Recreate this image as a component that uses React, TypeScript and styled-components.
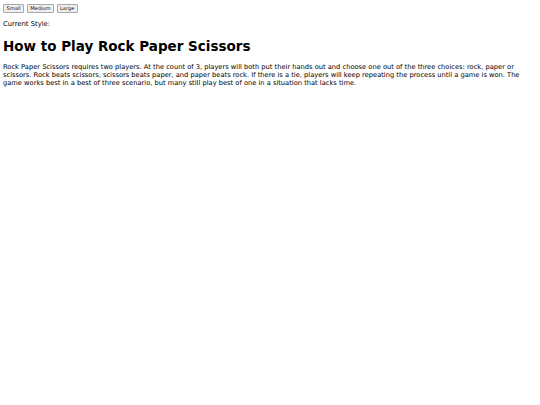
import styled, { createGlobalStyle } from 'styled-components';

const GlobalStyle = createGlobalStyle`
  body {
    margin: 3px;
    font-family: "DejaVu Sans", Verdana, sans-serif;
    background: #fff;
    color: #000;
  }
`;

const Toolbar = styled.div`
  display: flex;
  gap: 2.5px;
  padding-top: 1px;
`;

const SizeButton = styled.button`
  font-family: "DejaVu Sans", Verdana, sans-serif;
  font-size: 5.1px;
  padding: 0 2.5px;
  height: 8.5px;
  line-height: 6px;
  background: #efefef;
  border: 1px solid #a8a8a8;
  border-radius: 1px;
  color: #111;
`;

const Status = styled.p`
  font-size: 6.8px;
  margin: 7.5px 0 0;
`;

const Title = styled.h1`
  font-size: 13.5px;
  font-weight: bold;
  margin: 10px 0 0;
`;

const Body = styled.p`
  font-size: 6.7px;
  line-height: 8px;
  margin: 9px 0 0;
`;

export default function App() {
  return (
    <>
      <GlobalStyle />
      <Toolbar>
        <SizeButton>Small</SizeButton>
        <SizeButton>Medium</SizeButton>
        <SizeButton>Large</SizeButton>
      </Toolbar>
      <Status>Current Style:</Status>
      <Title>How to Play Rock Paper Scissors</Title>
      <Body>
        Rock Paper Scissors requires two players. At the count of 3, players will both put their hands
        out and choose one out of the three choices: rock, paper or scissors. Rock beats scissors,
        scissors beats paper, and paper beats rock. If there is a tie, players will keep repeating the
        process until a game is won. The game works best in a best of three scenario, but many still
        play best of one in a situation that lacks time.
      </Body>
    </>
  );
}
